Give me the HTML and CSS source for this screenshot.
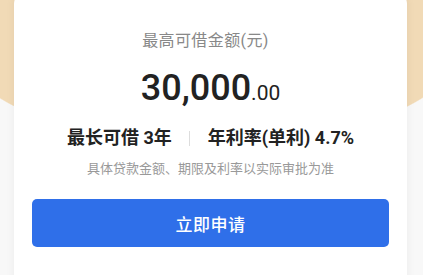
FILE: index.html
```html
<!DOCTYPE html>
<html lang="zh-CN">
<head>
<meta charset="utf-8">
<title>最高可借金额</title>
<link rel="stylesheet" href="styles.css">
</head>
<body>
<div class="page">
  <div class="card">
    <div class="title">最高可借金额(元)</div>
    <div class="amount"><span class="int">30,000</span><span class="dec">.00</span></div>
    <div class="terms">
      <span>最长可借 3年</span>
      <span class="sep"></span>
      <span>年利率(单利) 4.7%</span>
    </div>
    <div class="note">具体贷款金额、期限及利率以实际审批为准</div>
    <button class="apply">立即申请</button>
  </div>
</div>
</body>
</html>
```

FILE: styles.css
```css
html, body {
  margin: 0;
  padding: 0;
}
body {
  width: 423px;
  height: 275px;
  overflow: hidden;
  font-family: Roboto, "Noto Sans CJK SC", sans-serif;
  background-color: #f8f8f8;
  background-image: radial-gradient(ellipse 262px 118px at 211px 29px, #f1dab6 99.3%, rgba(241,218,182,0) 100%);
  background-repeat: no-repeat;
}
.page {
  display: flex;
  flex-direction: column;
}
.card {
  margin: -8px 16px 0 14px;
  padding: 38px 18px 40px;
  background: #ffffff;
  border-radius: 12px;
  box-shadow: 0 0 10px rgba(0, 0, 0, 0.06);
  display: flex;
  flex-direction: column;
  align-items: center;
}
.title {
  font-size: 16px;
  line-height: 22px;
  color: #888888;
  letter-spacing: 0.4px;
  padding-right: 10px;
}
.amount {
  margin-top: 16px;
  font-size: 36px;
  line-height: 40px;
  color: #222222;
}
.amount .int {
  font-weight: 500;
}
.amount .dec {
  font-size: 21px;
  line-height: 1;
  font-weight: 400;
}
.terms {
  margin-top: 18px;
  display: flex;
  align-items: center;
  font-size: 18px;
  line-height: 24px;
  font-weight: 700;
  color: #222222;
}
.sep {
  width: 1px;
  height: 15px;
  background: #dddddd;
  margin: 0 18px 0 17px;
}
.note {
  margin-top: 10px;
  font-size: 13px;
  line-height: 18px;
  color: #999999;
}
.apply {
  margin-top: 21px;
  align-self: stretch;
  height: 48px;
  border: none;
  border-radius: 5px;
  background: #2f6fe9;
  color: #ffffff;
  font-family: Roboto, "Noto Sans CJK SC", sans-serif;
  font-size: 17px;
  font-weight: 500;
  letter-spacing: 0.5px;
}
```
